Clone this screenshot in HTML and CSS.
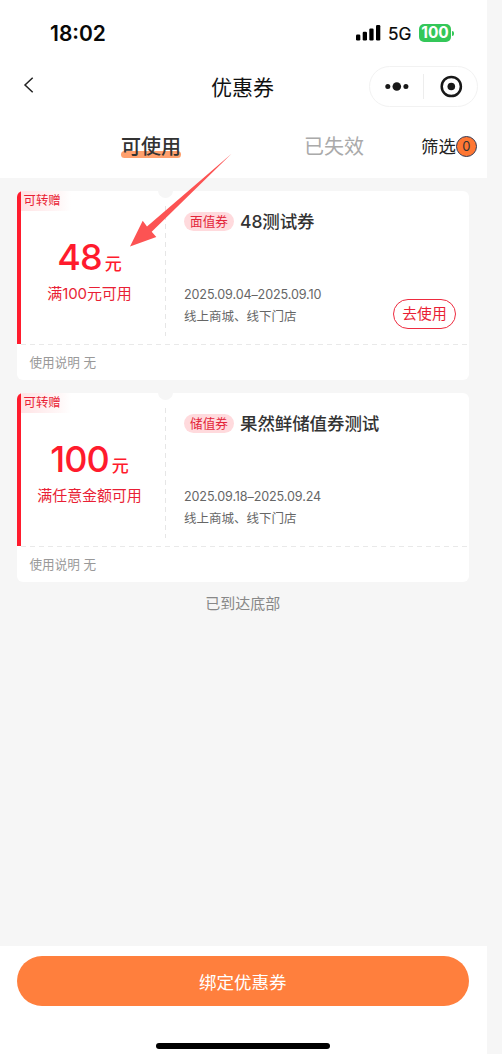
FILE: index.html
```html
<!DOCTYPE html>
<html lang="zh-CN">
<head>
<meta charset="utf-8">
<title>优惠券</title>
<link rel="stylesheet" href="styles.css">
</head>
<body>
<div class="phone">
  <header class="status">
    <span class="time">18:02</span>
    <svg class="signal" width="25" height="17" viewBox="0 0 25 17"><rect x="0" y="9.5" width="4.3" height="6" rx="1.2"/><rect x="6.7" y="6.7" width="4.3" height="8.8" rx="1.2"/><rect x="13.3" y="3.5" width="4.3" height="12" rx="1.2"/><rect x="20" y="0" width="4.3" height="15.5" rx="1.2"/></svg>
    <span class="network">5G</span>
    <span class="battery">100</span>
    <i class="battery-cap"></i>
  </header>
  <nav class="navbar">
    <svg class="back" width="12" height="18" viewBox="0 0 12 18"><path d="M9.7 1.7 2 9l7.7 7.3" fill="none" stroke="#222" stroke-width="1.5"/></svg>
    <h1 class="title">优惠券</h1>
    <div class="capsule">
      <svg width="107" height="39" viewBox="0 0 107 39"><g fill="#181818"><circle cx="17.8" cy="19.5" r="2.5"/><circle cx="26.8" cy="19.5" r="4.3"/><circle cx="35.9" cy="19.5" r="2.5"/><circle cx="81.3" cy="19.5" r="3.8"/></g><circle cx="81.3" cy="19.5" r="9.6" fill="none" stroke="#181818" stroke-width="2.5"/><path d="M53.5 7v25" stroke="#ededed"/></svg>
    </div>
  </nav>
  <div class="tabs">
    <span class="tab active">可使用</span>
    <span class="tab expired">已失效</span>
    <span class="filter">筛选</span><span class="count">0</span>
  </div>
  <main class="list">
    <article class="coupon">
      <div class="body">
        <div class="value">
          <span class="give">可转赠</span>
          <p class="amount"><b>48</b><small>元</small></p>
          <p class="rule">满100元可用</p>
        </div>
        <i class="split"></i>
        <div class="info">
          <div class="heading"><span class="badge">面值券</span><h2>48测试券</h2></div>
          <div class="detail">
            <div class="meta"><p class="date">2025.09.04–2025.09.10</p><p class="place">线上商城、线下门店</p></div>
            <button class="use">去使用</button>
          </div>
        </div>
      </div>
      <p class="note">使用说明 无</p>
    </article>
    <article class="coupon">
      <div class="body">
        <div class="value">
          <span class="give">可转赠</span>
          <p class="amount"><b>100</b><small>元</small></p>
          <p class="rule">满任意金额可用</p>
        </div>
        <i class="split"></i>
        <div class="info">
          <div class="heading"><span class="badge">储值券</span><h2>果然鲜储值券测试</h2></div>
          <div class="detail">
            <div class="meta"><p class="date">2025.09.18–2025.09.24</p><p class="place">线上商城、线下门店</p></div>
          </div>
        </div>
      </div>
      <p class="note">使用说明 无</p>
    </article>
    <p class="end">已到达底部</p>
  </main>
  <footer class="footer">
    <button class="bind">绑定优惠券</button>
    <i class="home"></i>
  </footer>
  <svg class="arrow" width="104" height="95" viewBox="0 0 104 95"><path d="M1 93.5 13.7 67.7 18 73.5 102.5.8 22.7 78.7 27.3 84Z" fill="#fc5353"/></svg>
</div>
</body>
</html>
```
FILE: styles.css
```css
* { box-sizing: border-box; margin: 0; padding: 0; }
body {
  background: #f6f6f6;
  font-family: Inter, "Noto Sans CJK SC", sans-serif;
  color: #333;
  white-space: nowrap;
}
button { font-family: inherit; }
svg, i { display: block; flex: none; }
.phone { position: relative; display: flex; flex-direction: column; width: 487px; height: 1054px; }
.status { display: flex; align-items: center; height: 66px; padding-left: 50px; background: #fff; color: #080808; }
.time { width: 306px; font-size: 21px; font-weight: 600; }
.network { width: 39px; padding-left: 7px; font-size: 17.3px; font-weight: 400; -webkit-text-stroke: .2px; }
.battery { width: 32px; height: 18px; margin-left: -1px; border-radius: 5px; background: #34c759; color: #fff; font-size: 15.5px; font-weight: 700; line-height: 18px; text-align: center; }
.battery-cap { width: 2px; height: 5px; margin-left: 1px; border-radius: 0 2px 2px 0; background: #34c759; }
.navbar { display: flex; align-items: center; height: 41px; padding-left: 23px; background: #fff; }
.back { margin-top: -3px; }
.title { width: 334px; padding: 2px 0 0 176px; font-size: 21px; font-weight: 400; line-height: 40px; color: #111; }
.capsule { width: 109px; height: 41px; border: 1px solid #f2f2f2; border-radius: 21px; }
.tabs { display: flex; align-items: center; height: 71px; padding: 0 0 0 121px; background: #fff; }
.tab { font-size: 20px; line-height: 24px; margin-top: 9px; }
.active { position: relative; z-index: 0; width: 60px; font-weight: 500; }
.active::before { content: ""; position: absolute; z-index: -1; left: 0; bottom: 1px; width: 60px; height: 7px; border-radius: 4px; background: #ffa06d; }
.expired { width: 117px; margin-left: 123px; color: #aaa; }
.filter { margin-top: 9px; font-size: 17.4px; font-weight: 400; line-height: 24px; color: #222; }
.count { width: 21px; height: 21px; margin-top: 7px; border: 1.5px solid #343850; border-radius: 50%; background: #ff7733; font-size: 13px; line-height: 19px; text-align: center; }
.list { flex: 1; display: flex; flex-direction: column; gap: 13px; padding: 13px 18.5px 0 17px; }
.coupon { height: 189px; border-radius: 6px; background: #fff; overflow: hidden; }
.body { display: flex; height: 154px; background: repeating-linear-gradient(90deg, #e9e9e9 0 5px, transparent 5px 9px) 4px 153px / 100% 1px no-repeat; }
.value { display: flex; flex-direction: column; align-items: center; width: 145px; height: 153px; border-left: 4px solid #ff1b2d; color: #e91f35; padding-right: 4px; }
.give { align-self: flex-start; width: 50px; height: 20px; padding-left: 2.5px; background: linear-gradient(90deg, #ffe3e5, #fff8f8 80%, #fff); font-size: 12.4px; line-height: 20px; }
.amount { display: flex; align-items: baseline; gap: 3px; height: 46px; margin-top: 23px; color: #ff1b2d; line-height: 46px; }
.amount b { font-size: 36px; font-weight: 500; letter-spacing: -1px; }
.amount small { font-size: 17px; font-weight: 500; }
.rule { margin-top: 4px; font-size: 15px; line-height: 20px; letter-spacing: -.1px; }
.split { position: relative; width: 7px; height: 130px; margin-top: 15px; background: repeating-linear-gradient(#e6e6e6 0 5px, transparent 5px 9px) 3px 0 / 1px 100% no-repeat; }
.split::before { content: ""; position: absolute; left: -4px; top: -23px; width: 15px; height: 15px; border-radius: 50%; background: #f6f6f6; }
.info { flex: 1; padding: 19px 12.5px 0 15px; }
.heading { display: flex; align-items: center; gap: 6px; height: 22px; }
.badge { width: 50px; height: 19px; border-radius: 10px; background: #ffdadd; color: #e3263a; font-size: 12.6px; line-height: 19px; text-align: center; }
h2 { padding-top: 1px; font-size: 17.5px; font-weight: 500; line-height: 22px; letter-spacing: -.1px; }
.detail { display: flex; justify-content: space-between; margin-top: 52px; color: #666; }
.date { font-size: 12.6px; line-height: 21px; letter-spacing: -.13px; }
.place { font-size: 12.5px; line-height: 24px; }
.use { width: 63px; height: 30px; margin-top: 15px; border: 1.5px solid #ee2b3f; border-radius: 15px; background: #fff; color: #e91f35; font-size: 14.8px; line-height: 27px; }
.note { padding-left: 12.5px; font-size: 12.6px; line-height: 35px; color: #999; }
.end { text-align: center; font-size: 15px; line-height: 18px; color: #888; }
.footer { height: 108px; padding: 10px 18.5px 0 17px; background: #fff; }
.bind { display: block; width: 100%; height: 50px; border: 0; border-radius: 25px; background: #ff7f3d; color: #fff; font-size: 17.5px; }
.home { width: 174px; height: 6px; margin: 37px auto 0; border-radius: 3px; background: #000; }
.arrow { position: absolute; left: 129px; top: 153px; }
```
